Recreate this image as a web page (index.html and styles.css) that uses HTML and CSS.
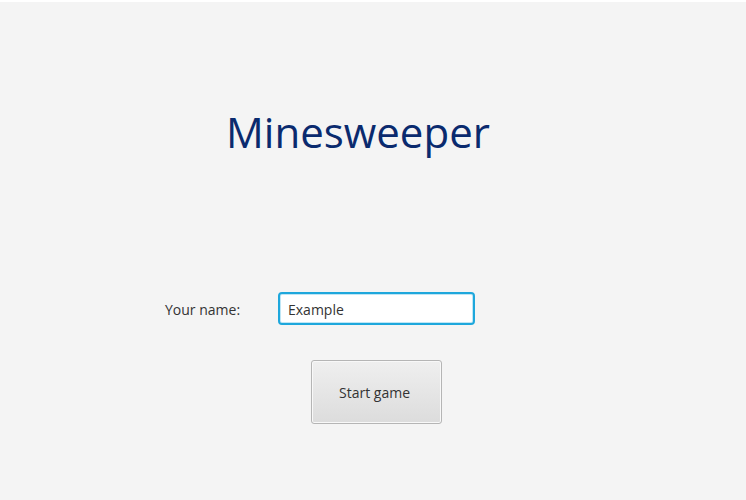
FILE: index.html
```html
<!DOCTYPE html>
<html>
<head>
<meta charset="utf-8">
<link rel="stylesheet" href="styles.css">
</head>
<body>
<div class="app">
  <h1 class="title">Minesweeper</h1>
  <div class="form-row">
    <label class="label" for="name">Your name:</label>
    <input class="field" id="name" type="text" value="Example">
  </div>
  <div class="actions">
    <button class="btn">Start game</button>
  </div>
</div>
</body>
</html>
```
FILE: styles.css
```css
html, body {
  margin: 0;
  padding: 0;
  background: #ffffff;
}
.app {
  box-sizing: border-box;
  height: 500px;
  border-top: 2px solid #ffffff;
  background: #f4f4f4;
  font-family: "Open Sans", "Noto Sans", sans-serif;
  color: #333333;
  display: flex;
  flex-direction: column;
}
.title {
  margin: 100px 0 0 226px;
  font-weight: 400;
  font-size: 42px;
  line-height: 60px;
  color: #0a2a6e;
  letter-spacing: 0;
}
.form-row {
  display: flex;
  align-items: center;
  margin: 130px 0 0 165px;
}
.label {
  width: 113px;
  font-size: 14px;
  color: #333333;
  padding-top: 2px;
}
.field {
  box-sizing: border-box;
  width: 197px;
  height: 33px;
  padding: 2px 8px 0;
  border: 2px solid #1ea7dc;
  border-radius: 4px;
  box-shadow: 0 0 0 1px #bfe6f5 inset;
  background: #ffffff;
  font-family: inherit;
  font-size: 14px;
  color: #333333;
  outline: none;
}
.actions {
  margin: 35px 0 0 311px;
}
.btn {
  box-sizing: border-box;
  width: 131px;
  height: 64px;
  border: 1px solid #b5b5b5;
  border-radius: 3px;
  background: linear-gradient(#efefef, #dcdcdc);
  box-shadow: inset 0 0 0 1px #f8f8f8;
  font-family: inherit;
  font-size: 14px;
  color: #333333;
  padding: 0 4px 0 0;
}
```
